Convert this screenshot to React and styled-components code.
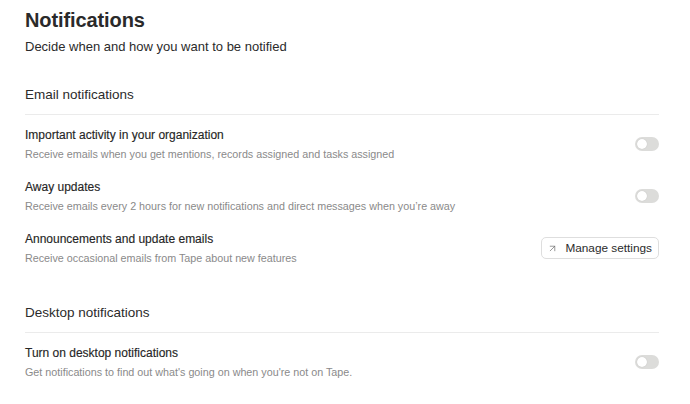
import React, { useState } from 'react';
import styled, { createGlobalStyle } from 'styled-components';
import { ArrowUpRight } from 'lucide-react';

const GlobalStyle = createGlobalStyle`
  body {
    margin: 0;
    background: #ffffff;
    font-family: "Liberation Sans", Arial, sans-serif;
    color: #2b2b2b;
  }
`;

const Page = styled.div`
  width: 634px;
  padding: 6px 31px 20px 25px;
`;

const Title = styled.h1`
  margin: 0;
  font-size: 20px;
  line-height: 28px;
  font-weight: 700;
  color: #2a2a2a;
  letter-spacing: -0.1px;
`;

const Subtitle = styled.p`
  margin: 3px 0 0;
  font-size: 13px;
  line-height: 20px;
  color: #2b2b2b;
`;

const Section = styled.section`
  margin-top: ${({ first }) => (first ? '28px' : '37px')};
`;

const SectionHeader = styled.h2`
  margin: 0;
  padding-bottom: 9px;
  border-bottom: 1px solid #ebebeb;
  font-size: 13.5px;
  line-height: 20px;
  font-weight: 400;
  color: #2b2b2b;
`;

const List = styled.div`
  display: flex;
  flex-direction: column;
  gap: 16px;
  padding-top: 11px;
`;

const Row = styled.div`
  display: flex;
  align-items: center;
  justify-content: space-between;
`;

const Text = styled.div`
  display: flex;
  flex-direction: column;
  gap: 2px;
`;

const RowTitle = styled.div`
  font-size: 12px;
  line-height: 18px;
  font-weight: 500;
  color: #262626;
  -webkit-text-stroke: 0.15px #262626;
`;

const RowDesc = styled.div`
  font-size: 10.75px;
  line-height: 16px;
  color: #8a8a8a;
`;

const Switch = styled.button`
  position: relative;
  width: 24px;
  height: 14px;
  padding: 0;
  border: none;
  border-radius: 7px;
  background: ${({ on }) => (on ? '#3b82f6' : '#dcdcda')};
  cursor: pointer;

  &::after {
    content: '';
    position: absolute;
    top: 2px;
    left: ${({ on }) => (on ? '12px' : '2px')};
    width: 10px;
    height: 10px;
    border-radius: 50%;
    background: #ffffff;
    box-shadow: 0 0 1px rgba(0, 0, 0, 0.2);
  }
`;

const Button = styled.button`
  display: flex;
  align-items: center;
  gap: 7px;
  height: 22px;
  padding: 0 6px 0 5px;
  border: 1px solid #dedede;
  border-radius: 5px;
  background: #ffffff;
  font-family: inherit;
  font-size: 11.8px;
  color: #2b2b2b;
  cursor: pointer;

  svg {
    color: #6a6a6a;
  }
`;

const Toggle = () => {
  const [on, setOn] = useState(false);
  return <Switch on={on ? 1 : 0} onClick={() => setOn(!on)} aria-label="toggle" />;
};

const Item = ({ title, desc, children }) => (
  <Row>
    <Text>
      <RowTitle>{title}</RowTitle>
      <RowDesc>{desc}</RowDesc>
    </Text>
    {children}
  </Row>
);

const App = () => (
  <Page>
    <GlobalStyle />
    <Title>Notifications</Title>
    <Subtitle>Decide when and how you want to be notified</Subtitle>

    <Section first>
      <SectionHeader>Email notifications</SectionHeader>
      <List>
        <Item
          title="Important activity in your organization"
          desc="Receive emails when you get mentions, records assigned and tasks assigned"
        >
          <Toggle />
        </Item>
        <Item
          title="Away updates"
          desc="Receive emails every 2 hours for new notifications and direct messages when you’re away"
        >
          <Toggle />
        </Item>
        <Item
          title="Announcements and update emails"
          desc="Receive occasional emails from Tape about new features"
        >
          <Button>
            <ArrowUpRight size={11} strokeWidth={1.5} />
            Manage settings
          </Button>
        </Item>
      </List>
    </Section>

    <Section>
      <SectionHeader>Desktop notifications</SectionHeader>
      <List>
        <Item
          title="Turn on desktop notifications"
          desc="Get notifications to find out what's going on when you're not on Tape."
        >
          <Toggle />
        </Item>
      </List>
    </Section>
  </Page>
);

export default App;
